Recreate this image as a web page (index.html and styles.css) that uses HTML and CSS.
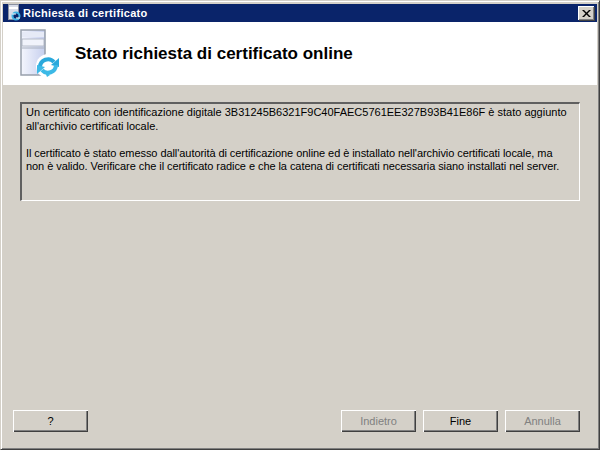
FILE: index.html
```html
<!DOCTYPE html>
<html lang="it">
<head>
    <meta charset="UTF-8">
    <meta name="viewport" content="width=device-width, initial-scale=1.0">
    <title>Richiesta di certificato</title>
    <link rel="stylesheet" href="styles.css">
</head>
<body>

    <div class="finestra">
        <!-- Barra del titolo -->
        <div class="titolo">
            <svg class="titolo-icona" width="16" height="18" viewBox="0 0 16 18">
                <rect x="2.500" y="0.500" width="10" height="15" fill="#d8dce8" stroke="#8a90a0"/>
                <rect x="3" y="3" width="9" height="2" fill="#ffffff"/>
                <circle cx="10" cy="12" r="3.500" fill="#0a246a" stroke="#3fb2e2" stroke-width="2"/>
                <path d="M6 10h4M14 14h-4" stroke="#ffffff" stroke-width="1"/>
            </svg>
            <span class="titolo-testo">Richiesta di certificato</span>
            <button class="chiudi" aria-label="Chiudi">
                <svg width="9" height="7" viewBox="0 0 9 7">
                    <path d="M0 0h2l2.500 2.500L7 0h2L5.500 3.500 9 7H7L4.500 4.500 2 7H0l3.500-3.500z" fill="#000"/>
                </svg>
            </button>
        </div>

        <!-- Intestazione bianca -->
        <div class="intestazione">
            <svg class="icona-server" width="42" height="50" viewBox="0 0 42 50">
                <defs>
                    <linearGradient id="corpo" x1="0" y1="0" x2="1" y2="0">
                        <stop offset="0" stop-color="#f4f6fd"/>
                        <stop offset="1" stop-color="#c6cfee"/>
                    </linearGradient>
                </defs>
                <path d="M1 1h24v45H1z" fill="url(#corpo)" stroke="#98a0ac" stroke-width="1.500"/>
                <path d="M2 3h22v5H2z" fill="#e6eaf6"/>
                <path d="M2 10h22v7H2z" fill="#f1f3fb" stroke="#a8afbd" stroke-width="0.800"/>
                <path d="M2 19h22" stroke="#a8afbd"/>
                <circle cx="28" cy="37" r="12" fill="#ffffff"/>
                <path d="M20 38a8 8 0 0 1 14-5" fill="none" stroke="#2aa9dc" stroke-width="4"/>
                <path d="M39 29l0 9-8-2z" fill="#2aa9dc"/>
                <path d="M36 36a8 8 0 0 1-14 5" fill="none" stroke="#3cb9e6" stroke-width="4"/>
                <path d="M17 45l0-9 8 2z" fill="#3cb9e6"/>
                <path d="M25 43l5 3-3 2z" fill="#3cb9e6"/>
            </svg>
            <h1 class="intestazione-testo">Stato richiesta di certificato online</h1>
        </div>

        <!-- Contenuto -->
        <div class="contenuto">
            <div class="messaggio">
                <p>Un certificato con identificazione digitale 3B31245B6321F9C40FAEC5761EE327B93B41E86F è stato aggiunto<br>all'archivio certificati locale.</p>
                <p class="stretto">Il certificato è stato emesso dall'autorità di certificazione online ed è installato nell'archivio certificati locale, ma<br>non è valido. Verificare che il certificato radice e che la catena di certificati necessaria siano installati nel server.</p>
            </div>
        </div>

        <!-- Pulsanti -->
        <div class="pulsanti">
            <button class="pulsante">?</button>
            <div class="pulsanti-destra">
                <button class="pulsante" disabled>Indietro</button>
                <button class="pulsante">Fine</button>
                <button class="pulsante" disabled>Annulla</button>
            </div>
        </div>
    </div>

</body>
</html>
```
FILE: styles.css
```css
:root {
    --grigio: #d4d0c8;
    --scuro: #404040;
    --ombra: #808080;
    --blu: #0a246a;
}

html, body {
    height: 100%;
}

body {
    margin: 0;
    background-color: var(--grigio);
    font-family: "Liberation Sans", sans-serif;
    font-size: 11px;
    color: #000;
}

.finestra {
    box-sizing: border-box;
    height: 450px;
    display: flex;
    flex-direction: column;
    padding: 3px 2px 3px 2px;
    background-color: var(--grigio);
    border-top: 1px solid var(--grigio);
    border-left: 1px solid var(--grigio);
    border-right: 1px solid var(--scuro);
    border-bottom: 1px solid var(--scuro);
    box-shadow: inset 1px 1px 0 #fff, inset -1px -1px 0 var(--ombra);
}

.titolo {
    flex: none;
    height: 18px;
    display: flex;
    align-items: center;
    padding: 0 3px 0 3px;
    background-color: var(--blu);
    color: #fff;
}

.titolo-icona {
    flex: none;
    margin-right: 1px;
}

.titolo-testo {
    flex: 1;
    font-weight: bold;
    font-size: 11px;
    letter-spacing: 0.3px;
}

.chiudi {
    width: 16px;
    height: 14px;
    padding: 0;
    display: flex;
    align-items: center;
    justify-content: center;
    background-color: var(--grigio);
    border: none;
    box-shadow: inset 1px 1px 0 #fff, inset -1px -1px 0 var(--ombra), 1px 1px 0 var(--scuro);
}

.intestazione {
    flex: none;
    height: 63px;
    display: flex;
    align-items: center;
    background-color: #fff;
}

.icona-server {
    flex: none;
    margin-left: 17px;
    margin-right: 13px;
}

.intestazione-testo {
    margin: 0;
    font-size: 17px;
    font-weight: bold;
}

.contenuto {
    flex: 1;
    padding: 17px 17px 0 17px;
}

.messaggio {
    box-sizing: border-box;
    height: 99px;
    padding: 2px 4px;
    border-top: 2px solid #606060;
    border-left: 2px solid #606060;
    border-right: 1px solid #fff;
    border-bottom: 1px solid #fff;
    line-height: 13.5px;
}

.messaggio p {
    margin: 0 0 13.5px 0;
}

.messaggio .stretto {
    letter-spacing: -0.065px;
}

.pulsanti {
    flex: none;
    display: flex;
    justify-content: space-between;
    padding: 0 17px 14px 10px;
}

.pulsanti-destra {
    display: flex;
    gap: 7px;
}

.pulsante {
    width: 75px;
    height: 22px;
    padding: 0;
    background-color: var(--grigio);
    border: none;
    box-shadow: inset 1px 1px 0 #fff, inset -1px -1px 0 var(--scuro), inset -2px -2px 0 var(--ombra);
    font-family: "Liberation Sans", sans-serif;
    font-size: 11px;
    color: #000;
}

.pulsante:disabled {
    color: var(--ombra);
}
```
